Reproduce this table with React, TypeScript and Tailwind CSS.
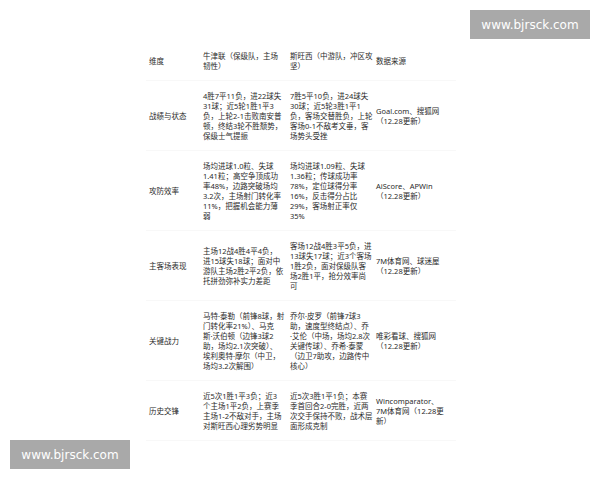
import React from "react";

type Row = {
  dim: string;
  oxford: string[];
  swansea: string[];
  source: string[];
};

const rows: Row[] = [
  {
    dim: "维度",
    oxford: ["牛津联（保级队，主场", "韧性）"],
    swansea: ["斯旺西（中游队，冲区攻", "坚）"],
    source: ["数据来源"],
  },
  {
    dim: "战绩与状态",
    oxford: [
      "4胜7平11负，进22球失",
      "31球；近5轮1胜1平3",
      "负，上轮2-1击败南安普",
      "顿，终结3轮不胜颓势，",
      "保级士气提振",
    ],
    swansea: [
      "7胜5平10负，进24球失",
      "30球；近5轮3胜1平1",
      "负，客场交替胜负，上轮",
      "客场0-1不敌考文垂，客",
      "场势头受挫",
    ],
    source: ["Goal.com、搜狐网", "（12.28更新）"],
  },
  {
    dim: "攻防效率",
    oxford: [
      "场均进球1.0粒、失球",
      "1.41粒；高空争顶成功",
      "率48%，边路突破场均",
      "3.2次，主场射门转化率",
      "11%，把握机会能力薄",
      "弱",
    ],
    swansea: [
      "场均进球1.09粒、失球",
      "1.36粒；传球成功率",
      "78%，定位球得分率",
      "16%，反击得分占比",
      "29%，客场射正率仅",
      "35%",
    ],
    source: ["AiScore、APWin", "（12.28更新）"],
  },
  {
    dim: "主客场表现",
    oxford: [
      "主场12战4胜4平4负，",
      "进15球失18球；面对中",
      "游队主场2胜2平2负，依",
      "托拼劲弥补实力差距",
    ],
    swansea: [
      "客场12战4胜3平5负，进",
      "13球失17球；近3个客场",
      "1胜2负，面对保级队客",
      "场2胜1平，抢分效率尚",
      "可",
    ],
    source: ["7M体育网、球迷屋", "（12.28更新）"],
  },
  {
    dim: "关键战力",
    oxford: [
      "马特·泰勒（前锋8球，射",
      "门转化率21%）、马克",
      "斯·沃伯顿（边锋3球2",
      "助，场均2.1次突破）、",
      "埃利奥特·摩尔（中卫，",
      "场均3.2次解围）",
    ],
    swansea: [
      "乔尔·皮罗（前锋7球3",
      "助，速度型终结点）、乔",
      "·艾伦（中场，场均2.8次",
      "关键传球）、乔希·泰蒙",
      "（边卫7助攻，边路传中",
      "核心）",
    ],
    source: ["唯彩看球、搜狐网", "（12.28更新）"],
  },
  {
    dim: "历史交锋",
    oxford: [
      "近5次1胜1平3负；近3",
      "个主场1平2负，上赛季",
      "主场1-2不敌对手，主场",
      "对斯旺西心理劣势明显",
    ],
    swansea: [
      "近5次3胜1平1负；本赛",
      "季首回合2-0完胜，近两",
      "次交手保持不败，战术层",
      "面形成克制",
    ],
    source: ["Wincomparator、", "7M体育网（12.28更", "新）"],
  },
];

function Lines({ lines }: { lines: string[] }) {
  return (
    <>
      {lines.map((l, i) => (
        <div key={i} className="h-[10px] whitespace-nowrap">
          {l}
        </div>
      ))}
    </>
  );
}

function Watermark() {
  return (
    <div className="flex h-[29px] w-[120px] items-center justify-center bg-[#a9a9a9] font-['DejaVu_Sans',sans-serif] text-[12px] text-white">
      www.bjrsck.com
    </div>
  );
}

export default function App() {
  return (
    <div className="relative h-[480px] w-[600px] overflow-hidden bg-white">
      <div className="pl-[146px] pt-[41px]">
        <table className="w-[310px] table-fixed border-collapse font-['Noto_Sans','Noto_Sans_CJK_SC',sans-serif] text-[7.5px] leading-[10px] text-[#2b2b2b]">
          <colgroup>
            <col className="w-[55px]" />
            <col className="w-[87px]" />
            <col className="w-[86px]" />
            <col className="w-[82px]" />
          </colgroup>
          <tbody>
            {rows.map((r) => (
              <tr key={r.dim} className="border-b border-[#f8f8f8]">
                <td className="px-[3px] py-[9.5px] align-middle">
                  <Lines lines={[r.dim]} />
                </td>
                <td className="px-[2px] py-[9.5px] align-middle">
                  <Lines lines={r.oxford} />
                </td>
                <td className="px-[2px] py-[9.5px] align-middle">
                  <Lines lines={r.swansea} />
                </td>
                <td className="px-[2px] py-[9.5px] align-middle">
                  <Lines lines={r.source} />
                </td>
              </tr>
            ))}
          </tbody>
        </table>
      </div>
      <div className="absolute right-[10px] top-[10px]">
        <Watermark />
      </div>
      <div className="absolute bottom-[11px] left-[10px]">
        <Watermark />
      </div>
    </div>
  );
}
